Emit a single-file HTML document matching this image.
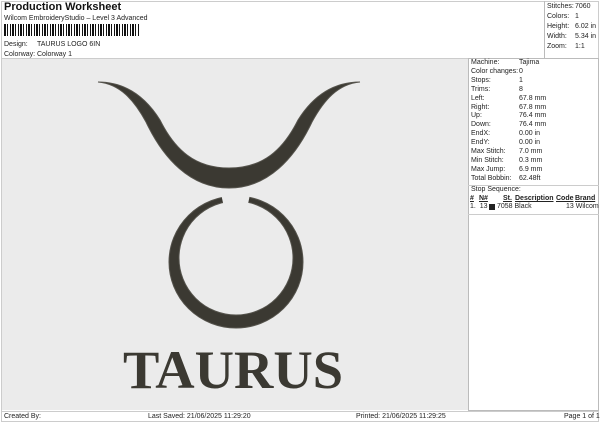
<!DOCTYPE html>
<html><head><style>
*{margin:0;padding:0;box-sizing:border-box}
body{width:600px;height:424px;background:#fff;font-family:"Liberation Sans",Arial,sans-serif;font-size:7px;color:#222;position:relative;overflow:hidden}
.a{position:absolute;white-space:nowrap}
.box{position:absolute;border:1px solid #bbb}
.r{font-size:7px}
</style></head><body>
<div class="box" style="left:1px;top:1px;width:598px;height:421px;border-color:#ccc"></div>
<div class="a" style="left:4px;top:1px;font-size:11px;font-weight:bold;color:#111">Production Worksheet</div>
<div class="a" style="left:4px;top:15px">Wilcom EmbroideryStudio – Level 3 Advanced</div>
<div class="a" style="left:4px;top:24px;width:136px;height:12px;background:repeating-linear-gradient(90deg,#111 0 2px,#fff 2px 3px,#111 3px 4px,#fff 4px 6px,#111 6px 7px,#fff 7px 8px)"></div>
<div class="a" style="left:4px;top:41px">Design:</div><div class="a" style="left:37px;top:41px">TAURUS LOGO 6IN</div>
<div class="a" style="left:4px;top:51px">Colorway:</div><div class="a" style="left:37px;top:51px">Colorway 1</div>
<div class="box" style="left:544px;top:1px;width:55px;height:57px;border-width:0 0 0 1px"></div>
<div class="a" style="left:547px;top:2px;line-height:10px">Stitches:<br>Colors:<br>Height:<br>Width:<br>Zoom:</div>
<div class="a" style="left:575px;top:2px;line-height:10px">7060<br>1<br>6.02 in<br>5.34 in<br>1:1</div>
<div class="a" style="left:2px;top:58px;width:466px;height:352px;background:#ebebeb;border-top:1px solid #ccc"></div>
<div class="box" style="left:468px;top:58px;width:131px;height:353px"></div>
<div class="a r" style="left:471px;top:59px;line-height:8.9px">Machine:<br>Color changes:<br>Stops:<br>Trims:<br>Left:<br>Right:<br>Up:<br>Down:<br>EndX:<br>EndY:<br>Max Stitch:<br>Min Stitch:<br>Max Jump:<br>Total Bobbin:</div>
<div class="a r" style="left:519px;top:59px;line-height:8.9px">Tajima<br>0<br>1<br>8<br>67.8 mm<br>67.8 mm<br>76.4 mm<br>76.4 mm<br>0.00 in<br>0.00 in<br>7.0 mm<br>0.3 mm<br>6.9 mm<br>62.48ft</div>
<div class="a" style="left:468px;top:185px;width:131px;border-top:1px solid #ccc"></div>
<div class="a r" style="left:471px;top:186px">Stop Sequence:</div>
<div class="a r" style="left:470px;top:195px;font-weight:bold;text-decoration:underline">#</div>
<div class="a r" style="left:479px;top:195px;font-weight:bold;text-decoration:underline">N#</div>
<div class="a r" style="left:503px;top:195px;font-weight:bold;text-decoration:underline">St.</div>
<div class="a r" style="left:515px;top:195px;font-weight:bold;text-decoration:underline">Description</div>
<div class="a r" style="left:556px;top:195px;font-weight:bold;text-decoration:underline">Code</div>
<div class="a r" style="left:575px;top:195px;font-weight:bold;text-decoration:underline">Brand</div>
<div class="a r" style="left:470px;top:203px">1.&nbsp;&nbsp;13</div>
<div class="a" style="left:489px;top:204px;width:6px;height:6px;background:#222"></div>
<div class="a r" style="left:497px;top:203px">7058&nbsp;Black</div>
<div class="a r" style="left:566px;top:203px">13 Wilcom</div>
<div class="a" style="left:468px;top:214px;width:131px;border-top:1px solid #ccc"></div>
<svg class="a" style="left:0;top:0" width="600" height="424">
<path fill="#3b3932" stroke="#55534c" stroke-width="1" d="M98,82 C120,84 134,100 146,122 C163,158 190,188 229,188 C268,188 295,158 312,122 C324,100 338,84 360,82 C333,82 313,96 298,120 C283,150 263,168 229,168 C195,168 175,150 160,120 C145,96 125,82 98,82 Z"/>
<defs><clipPath id="c"><polygon points="0,0 600,0 600,424 0,424 0,0 218,180 236,262 253,180 0,0"/></clipPath></defs>
<path clip-path="url(#c)" fill-rule="evenodd" fill="#3b3932" stroke="#55534c" stroke-width="1" d="M169,262 A67,66 0 1 0 303,262 A67,66 0 1 0 169,262 Z M179,258 A57,57 0 1 0 293,258 A57,57 0 1 0 179,258 Z"/>
<text x="233" y="388" text-anchor="middle" font-family="Liberation Serif,serif" font-weight="bold" font-size="54" fill="#3b3932" textLength="220" lengthAdjust="spacingAndGlyphs">TAURUS</text>
</svg>
<div class="a" style="left:2px;top:411px;width:597px;border-top:1px solid #ccc"></div>
<div class="a" style="left:4px;top:413px">Created By:</div>
<div class="a" style="left:148px;top:413px">Last Saved: 21/06/2025 11:29:20</div>
<div class="a" style="left:356px;top:413px">Printed: 21/06/2025 11:29:25</div>
<div class="a" style="left:564px;top:413px">Page 1 of 1</div>
</body></html>
